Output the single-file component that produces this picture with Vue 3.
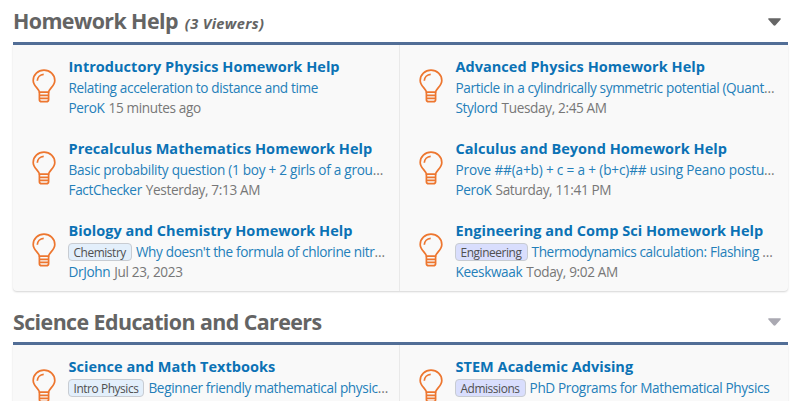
<template>
  <main class="forum">
    <section v-for="category in categories" :key="category.title" class="category">
      <header class="category__header">
        <h2 class="category__title">
          {{ category.title }}
          <em v-if="category.viewers" class="category__viewers">({{ category.viewers }} Viewers)</em>
        </h2>
        <svg
          class="category__toggle"
          :class="{ 'category__toggle--faded': category.faded }"
          viewBox="0 0 13 8"
        >
          <path d="M0.9 0.2h11.2c.8 0 1 .7.5 1.2L7.5 7.2c-.6.6-1.4.6-2 0L.4 1.4C-.1.9.1.2.9.2z" />
        </svg>
      </header>

      <div class="category__body">
        <article v-for="node in category.nodes" :key="node.title" class="node">
          <svg class="node__icon" viewBox="0 0 24 34">
            <path d="M7.4 23.2C7 19.6 1.2 17.2 1.2 11.4a10.8 10.3 0 0 1 21.6 0c0 5.8-5.8 8.2-6.2 11.8z" />
            <path d="M7.4 23.2v7.2q0 2.3 2.3 2.3h4.6q2.3 0 2.3-2.3v-7.2M7.4 26.3h9.2M7.4 29.4h9.2" />
            <path d="M5.3 11.7c.2-3.5 2.8-6.2 6.4-6.4" />
          </svg>
          <div class="node__main">
            <h3 class="node__title">{{ node.title }}</h3>
            <div class="node__line">
              <span v-if="node.prefix" class="label" :class="`label--${node.tone}`">{{ node.prefix }}</span>
              <a class="node__thread" :class="node.spacing && `node__thread--${node.spacing}`">{{ node.thread }}</a><span v-if="node.cut">…</span>
            </div>
            <div v-if="node.user" class="node__line node__line--meta">
              <a class="node__user">{{ node.user }}</a>
              <time>{{ node.date }}</time>
            </div>
          </div>
        </article>
      </div>
    </section>
  </main>
</template>

<script setup>
const categories = [
  {
    title: 'Homework Help',
    viewers: 3,
    nodes: [
      {
        title: 'Introductory Physics Homework Help',
        thread: 'Relating acceleration to distance and time',
        user: 'PeroK',
        date: '15 minutes ago',
      },
      {
        title: 'Advanced Physics Homework Help',
        thread: 'Particle in a cylindrically symmetric potential (Quant',
        cut: true,
        user: 'Stylord',
        date: 'Tuesday, 2:45 AM',
      },
      {
        title: 'Precalculus Mathematics Homework Help',
        thread: 'Basic probability question (1 boy + 2 girls of a grou',
        spacing: 'wide',
        cut: true,
        user: 'FactChecker',
        date: 'Yesterday, 7:13 AM',
      },
      {
        title: 'Calculus and Beyond Homework Help',
        thread: 'Prove ##(a+b) + c = a + (b+c)## using Peano postu',
        spacing: 'wider',
        cut: true,
        user: 'PeroK',
        date: 'Saturday, 11:41 PM',
      },
      {
        title: 'Biology and Chemistry Homework Help',
        prefix: 'Chemistry',
        tone: 'sky',
        thread: "Why doesn't the formula of chlorine nitr",
        cut: true,
        user: 'DrJohn',
        date: 'Jul 23, 2023',
      },
      {
        title: 'Engineering and Comp Sci Homework Help',
        prefix: 'Engineering',
        tone: 'violet',
        thread: 'Thermodynamics calculation: Flashing ',
        cut: true,
        user: 'Keeskwaak',
        date: 'Today, 9:02 AM',
      },
    ],
  },
  {
    title: 'Science Education and Careers',
    faded: true,
    nodes: [
      {
        title: 'Science and Math Textbooks',
        prefix: 'Intro Physics',
        tone: 'sky',
        thread: 'Beginner friendly mathematical physic',
        cut: true,
      },
      {
        title: 'STEM Academic Advising',
        prefix: 'Admissions',
        tone: 'violet',
        thread: 'PhD Programs for Mathematical Physics',
      },
    ],
  },
];
</script>

<style>
body {
  background: #fff;
  overflow: hidden;
}
</style>

<style scoped>
.forum {
  box-sizing: border-box;
  height: 401px;
  overflow: hidden;
  padding: 0 12px 0 13px;
  font-family: 'Open Sans', 'Noto Sans', sans-serif;
  font-size: 13.6px;
  letter-spacing: -0.36px;
  color: #777;
}

.category {
  margin-bottom: 9px;
}

.category__header {
  box-sizing: border-box;
  display: flex;
  align-items: center;
  justify-content: space-between;
  height: 45px;
  padding-right: 7px;
  border-bottom: 3px solid #5a759b;
  border-bottom-color: #526e97;
}

.category__title {
  margin: 0;
  padding-top: 2px;
  font-size: 21.4px;
  font-weight: 700;
  line-height: 30px;
  letter-spacing: -0.58px;
  white-space: nowrap;
  color: #646464;
}

.category__viewers {
  margin-left: 2px;
  font-size: 14.6px;
  letter-spacing: 0.35px;
}

.category__toggle {
  width: 13px;
  height: 8px;
  margin-top: 1px;
  fill: #666;
}

.category__toggle--faded {
  fill: #aaa9b2;
}

.category__body {
  display: grid;
  grid-template-columns: 387px 1fr;
  background: #f9f9f9;
  border-radius: 0 0 4px 4px;
  box-shadow: 0 1px 2px rgba(0, 0, 0, 0.17);
}

.node {
  box-sizing: border-box;
  display: flex;
  height: 82px;
  padding: 11px 8px 0 18.5px;
}

.node:nth-child(odd) {
  border-right: 1px solid #e9e9e9;
}

.node__icon {
  flex: none;
  width: 24px;
  height: 34px;
  margin: 13px 13px 0 0;
  fill: none;
  stroke: #ed762f;
  stroke-width: 1.7;
}

.node__main {
  min-width: 0;
  white-space: nowrap;
}

.node__title {
  margin: 0 0 1px;
  font-size: 14.5px;
  font-weight: 700;
  line-height: 21px;
  letter-spacing: 0.03px;
  color: #0b72b5;
}

.node__line {
  display: flex;
  height: 20px;
  line-height: 20px;
  white-space: pre;
}

.node__line--meta {
  gap: 4px;
}

.node__thread,
.node__user {
  color: #247fb9;
}

.node__thread--wide {
  letter-spacing: -0.27px;
}

.node__thread--wider {
  letter-spacing: -0.16px;
}

.label {
  box-sizing: border-box;
  height: 18px;
  margin: 1px 4px 0 -1px;
  padding: 0 5px;
  border: 1px solid #c8ccd2;
  border-radius: 4px;
  font-size: 11.9px;
  line-height: 16px;
  letter-spacing: -0.42px;
  color: #505050;
}

.label--sky {
  background: #e3effb;
}

.label--violet {
  background: #d9defd;
}
</style>
